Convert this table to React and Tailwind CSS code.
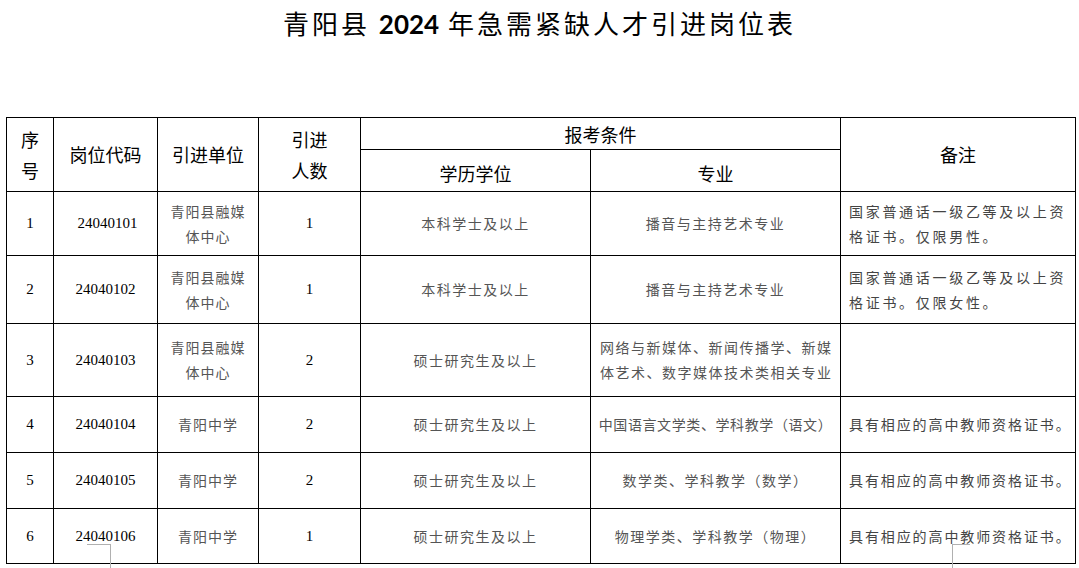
import React from 'react';

const rows = [
  {
    no: '1',
    code: '\u00a024040101',
    unit: ['青阳县融媒', '体中心'],
    count: '1',
    edu: '本科学士及以上',
    major: ['播音与主持艺术专业'],
    majorTrack: 'tracking-[1.5px]',
    note: ['国家普通话一级乙等及以上资', '格证书。仅限男性。'],
    h: 'h-[64px]',
  },
  {
    no: '2',
    code: '24040102',
    unit: ['青阳县融媒', '体中心'],
    count: '1',
    edu: '本科学士及以上',
    major: ['播音与主持艺术专业'],
    majorTrack: 'tracking-[1.5px]',
    note: ['国家普通话一级乙等及以上资', '格证书。仅限女性。'],
    h: 'h-[68px]',
  },
  {
    no: '3',
    code: '24040103',
    unit: ['青阳县融媒', '体中心'],
    count: '2',
    edu: '硕士研究生及以上',
    major: ['网络与新媒体、新闻传播学、新媒', '体艺术、数字媒体技术类相关专业'],
    majorTrack: 'tracking-[1.5px]',
    note: [],
    h: 'h-[73px]',
  },
  {
    no: '4',
    code: '24040104',
    unit: ['青阳中学'],
    count: '2',
    edu: '硕士研究生及以上',
    major: ['中国语言文学类、学科教学（语文）'],
    majorTrack: 'tracking-[0.6px]',
    note: ['具有相应的高中教师资格证书。'],
    h: 'h-[56px]',
  },
  {
    no: '5',
    code: '24040105',
    unit: ['青阳中学'],
    count: '2',
    edu: '硕士研究生及以上',
    major: ['数学类、学科教学（数学）'],
    majorTrack: 'tracking-[1.5px]',
    note: ['具有相应的高中教师资格证书。'],
    h: 'h-[56px]',
  },
  {
    no: '6',
    code: '24040106',
    unit: ['青阳中学'],
    count: '1',
    edu: '硕士研究生及以上',
    major: ['物理学类、学科教学（物理）'],
    majorTrack: 'tracking-[1.5px]',
    note: ['具有相应的高中教师资格证书。'],
    h: 'h-[55px]',
  },
];

const cjk = "font-['Noto_Sans_CJK_SC',sans-serif]";
const serif = "font-['Liberation_Serif','Noto_Sans_CJK_SC',serif]";
const cell = 'border border-black p-0 align-middle';

const App = () => {
  return (
    <div className={`relative w-[1079px] h-[568px] overflow-hidden bg-white ${cjk}`}>
      {/* 标题 */}
      <h1 className="pt-[6px] h-[117px] text-center text-[26px] leading-[34px] tracking-[3px] text-black font-normal">
        青阳县 <span className="font-['Lato',sans-serif] font-bold tracking-normal">2024</span> 年急需紧缺人才引进岗位表
      </h1>

      <table className="ml-[6px] w-[1069px] table-fixed border-collapse">
        <colgroup>
          <col className="w-[47px]" />
          <col className="w-[104px]" />
          <col className="w-[101px]" />
          <col className="w-[102px]" />
          <col className="w-[230px]" />
          <col className="w-[250px]" />
          <col className="w-[235px]" />
        </colgroup>
        <thead className="text-[18px] text-black">
          <tr className="h-[32px]">
            <th rowSpan={2} className={`${cell} font-normal leading-[31px]`}>
              序<br />号
            </th>
            <th rowSpan={2} className={`${cell} font-normal`}>岗位代码</th>
            <th rowSpan={2} className={`${cell} font-normal`}>引进单位</th>
            <th rowSpan={2} className={`${cell} font-normal leading-[31px]`}>
              引进<br />人数
            </th>
            <th colSpan={2} className={`${cell} font-normal leading-[30px]`}>报考条件</th>
            <th rowSpan={2} className={`${cell} font-normal`}>备注</th>
          </tr>
          <tr className="h-[42px]">
            <th className={`${cell} font-normal pt-[6px]`}>学历学位</th>
            <th className={`${cell} font-normal pt-[6px]`}>专业</th>
          </tr>
        </thead>
        <tbody>
          {rows.map((r) => (
            <tr key={r.no} className={r.h}>
              <td className={`${cell} ${serif} text-center text-[15px] text-black`}>{r.no}</td>
              <td className={`${cell} ${serif} text-center text-[15px] text-black`}>{r.code}</td>
              <td className={`${cell} text-center text-[14px] leading-[25px] tracking-[1px] text-[#555]`}>
                {r.unit.map((t) => (
                  <div key={t}>{t}</div>
                ))}
              </td>
              <td className={`${cell} ${serif} text-center text-[15px] text-black`}>{r.count}</td>
              <td className={`${cell} text-center text-[14px] tracking-[1.5px] text-[#555]`}>{r.edu}</td>
              <td className={`${cell} text-center text-[14px] leading-[25px] text-[#555] whitespace-nowrap ${r.majorTrack}`}>
                {r.major.map((t) => (
                  <div key={t} className={r.major.length > 1 ? 'text-left pl-[9px]' : ''}>
                    {t}
                  </div>
                ))}
              </td>
              <td className={`${cell} pl-[8px] text-[14px] leading-[25px] text-[#444] whitespace-nowrap`}>
                {r.note.map((t) => (
                  <div key={t} className={r.note.length > 1 ? 'tracking-[2.7px]' : 'tracking-[1.9px]'}>
                    {t}
                  </div>
                ))}
              </td>
            </tr>
          ))}
        </tbody>
      </table>

      {/* 裁切标记 */}
      <div className="absolute left-[87px] top-[544px] w-[24px] h-[24px] border-t border-r border-[#b0b0b0]" />
      <div className="absolute left-[952px] top-[544px] w-[18px] h-[24px] border-t border-l border-[#b0b0b0]" />
    </div>
  );
};

export default App;
